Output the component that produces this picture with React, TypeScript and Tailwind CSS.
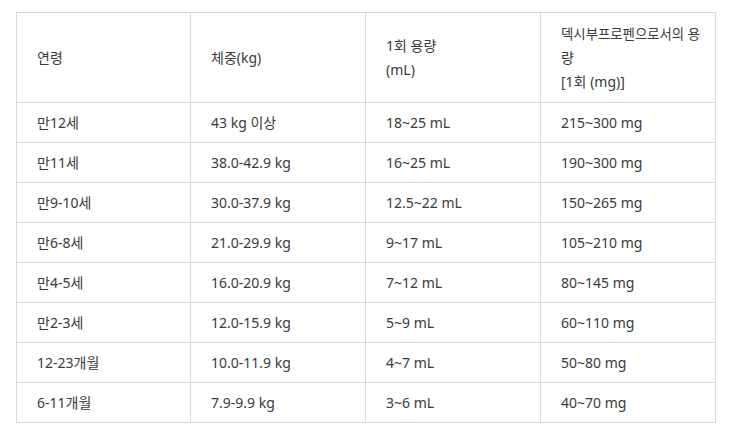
const ROWS: [string, string, string, string][] = [
  ['만12세', '43 kg 이상', '18~25 mL', '215~300 mg'],
  ['만11세', '38.0-42.9 kg', '16~25 mL', '190~300 mg'],
  ['만9-10세', '30.0-37.9 kg', '12.5~22 mL', '150~265 mg'],
  ['만6-8세', '21.0-29.9 kg', '9~17 mL', '105~210 mg'],
  ['만4-5세', '16.0-20.9 kg', '7~12 mL', '80~145 mg'],
  ['만2-3세', '12.0-15.9 kg', '5~9 mL', '60~110 mg'],
  ['12-23개월', '10.0-11.9 kg', '4~7 mL', '50~80 mg'],
  ['6-11개월', '7.9-9.9 kg', '3~6 mL', '40~70 mg'],
]

export default function App() {
  return (
    <div
      className="w-[730px] h-[434px] bg-white pt-3 pl-4 text-[14px] leading-6 text-[#3a3a3a]"
      style={{ fontFamily: '"Noto Sans", "Noto Sans CJK KR", sans-serif' }}
    >
      <table className="w-[700px] table-fixed border-collapse">
        <colgroup>
          <col className="w-[174px]" />
          <col className="w-[175px]" />
          <col className="w-[175px]" />
          <col className="w-[175px]" />
        </colgroup>
        <thead>
          <tr className="h-[90px]">
            <td className="border border-[#d9d9d9] pl-5 align-middle">연령</td>
            <td className="border border-[#d9d9d9] pl-5 align-middle">체중(kg)</td>
            <td className="border border-[#d9d9d9] pl-5 align-middle">
              1회 용량
              <br />
              (mL)
            </td>
            <td className="border border-[#d9d9d9] pl-5 pr-1 align-middle whitespace-nowrap">
              <span className="text-[13.4px]">덱시부프로펜으로서의 용</span>
              <br />
              량
              <br />
              [1회 (mg)]
            </td>
          </tr>
        </thead>
        <tbody>
          {ROWS.map((r) => (
            <tr key={r[0]} className="h-10">
              {r.map((c, i) => (
                <td key={i} className="border border-[#d9d9d9] pl-5 align-middle">
                  {c}
                </td>
              ))}
            </tr>
          ))}
        </tbody>
      </table>
    </div>
  )
}
